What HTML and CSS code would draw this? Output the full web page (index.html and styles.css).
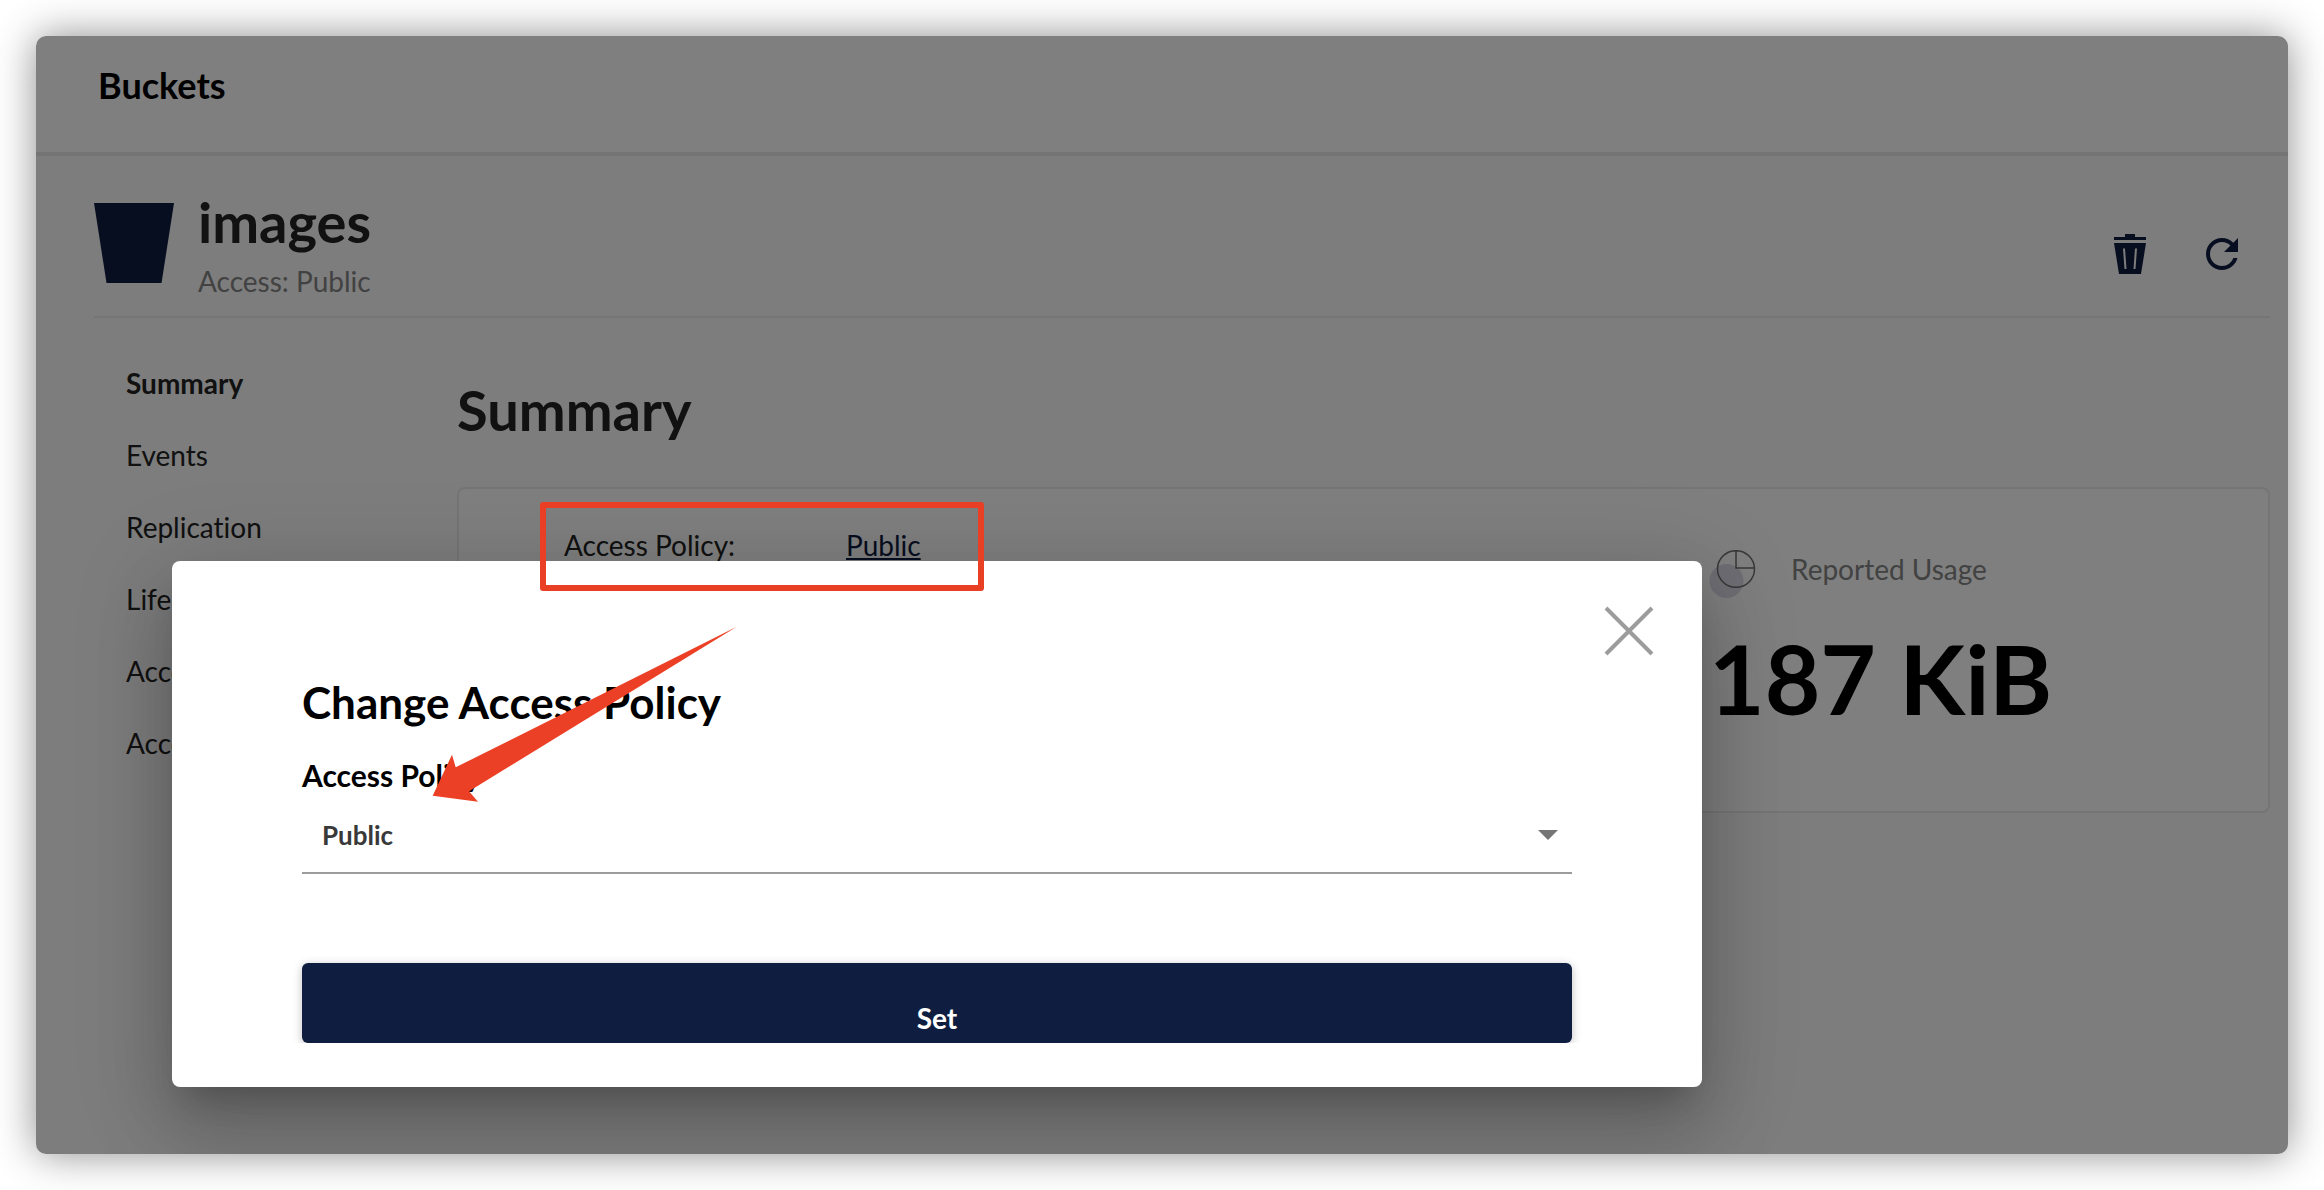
FILE: index.html
```html
<!DOCTYPE html>
<html lang="en">
<head>
<meta charset="utf-8">
<title>Buckets</title>
<link rel="stylesheet" href="styles.css">
</head>
<body>
<div class="window">
  <header class="topbar"><h1 class="topbar-title">Buckets</h1></header>
  <main class="page">
    <section class="bucket-head">
      <svg class="bucket-icon" viewBox="0 0 80 80" aria-hidden="true"><path d="M0 0H80L67.500 80H12.500Z"/></svg>
      <div class="bucket-info">
        <h2 class="heading">images</h2>
        <p class="bucket-access">Access: Public</p>
      </div>
      <div class="actions">
        <button class="icon-button" type="button" aria-label="Delete bucket">
          <svg width="32" height="40" viewBox="0 0 32 40"><path fill-rule="evenodd" d="M11 0H21V3H32V6H0V3H11ZM0 9H32L27 40H5ZM9 14.500L10.500 35H12.500L11 14.500ZM21 14.500L19.500 35H21.500L23 14.500Z"/></svg>
        </button>
        <button class="icon-button" type="button" aria-label="Refresh">
          <svg width="32" height="32" viewBox="4 4 16 16"><path d="M17.650 6.350C16.200 4.900 14.210 4 12 4c-4.420 0-7.990 3.580-7.990 8s3.570 8 7.990 8c3.730 0 6.840-2.550 7.730-6h-2.080c-.82 2.330-3.040 4-5.650 4-3.310 0-6-2.690-6-6s2.690-6 6-6c1.660 0 3.140.69 4.220 1.780L13 11h7V4z"/></svg>
        </button>
      </div>
    </section>
    <div class="columns">
      <nav class="side-nav">
        <a class="nav-link nav-link-active" href="#summary">Summary</a>
        <a class="nav-link" href="#events">Events</a>
        <a class="nav-link" href="#replication">Replication</a>
        <a class="nav-link" href="#lifecycle">Lifecycle</a>
        <a class="nav-link" href="#audit">Access Audit</a>
        <a class="nav-link" href="#rules">Access Rules</a>
      </nav>
      <section class="summary" id="summary">
        <h2 class="heading">Summary</h2>
        <div class="card">
          <span class="card-label">Access Policy:</span>
          <a class="card-link" href="#policy">Public</a>
          <div class="usage">
            <div class="usage-head">
              <svg width="48" height="48" viewBox="0 0 48 48" aria-hidden="true">
                <circle class="pie-shade" cx="17.500" cy="31" r="17"/>
                <path class="pie-line" d="M27 .7V18H45.500M45.500 19a18.500 18.300 0 1 1-37 0a18.500 18.300 0 1 1 37 0Z"/>
              </svg>
              <span>Reported Usage</span>
            </div>
            <strong class="usage-value">187 KiB</strong>
          </div>
        </div>
      </section>
    </div>
  </main>

  <div class="backdrop">
    <div class="dialog" role="dialog" aria-modal="true" aria-labelledby="dialog-title">
      <div class="dialog-close-row">
        <button class="close-button" type="button" aria-label="Close">
          <svg width="50" height="50" viewBox="0 0 50 50"><path d="M2 2L48 48M48 2L2 48"/></svg>
        </button>
      </div>
      <form class="dialog-body">
        <h2 class="dialog-title" id="dialog-title">Change Access Policy</h2>
        <label class="field-label" for="policy">Access Policy</label>
        <div class="select-box">
          <select class="select" id="policy">
            <option>Public</option>
            <option>Private</option>
            <option>Custom</option>
          </select>
          <svg class="select-arrow" width="20" height="10" viewBox="0 0 20 10" aria-hidden="true"><path d="M0 0H20L10 10Z"/></svg>
        </div>
        <button class="submit" type="button">Set</button>
      </form>
    </div>
  </div>

  <div class="mark-box"></div>
  <svg class="mark-arrow" width="306" height="176" viewBox="0 0 306 176" aria-hidden="true"><path d="M.7 169.700L20 128.700L23.700 141.300L304.700 .7L37 165.300L46 175.700Z"/></svg>
</div>
</body>
</html>
```
FILE: styles.css
```css
* {
  box-sizing: border-box;
}

body {
  display: flex;
  min-height: 100vh;
  margin: 0;
  padding: 36px;
  background: #fff;
  color: #222;
  font-family: Lato, "Liberation Sans", sans-serif;
  font-size: 28px;
  font-variant-ligatures: none;
  line-height: 34px;
  text-rendering: optimizeLegibility;
}

h1,
h2,
p {
  margin: 0;
}

button {
  font-family: inherit;
  border: 0;
  cursor: pointer;
}

svg {
  display: block;
}

.window {
  position: relative;
  flex: 1;
  border-radius: 10px;
  background: #fafafa;
  box-shadow: 0 0 40px rgba(0, 0, 0, 0.45);
}

.topbar {
  padding: 27px 62px 45px;
  border-bottom: 4px solid #e8e8e8;
  border-radius: 10px 10px 0 0;
  background: #fff;
}

.topbar-title {
  color: #000;
  font-size: 36px;
  line-height: 44px;
}

.page {
  padding: 32px 18px 0 58px;
}

.bucket-head {
  display: flex;
  align-items: center;
  gap: 24px;
  padding-bottom: 18px;
  border-bottom: 2px solid #eaeaea;
}

.bucket-icon {
  width: 80px;
  height: 80px;
  fill: #0f1d40;
}

.bucket-info {
  flex: 1;
}

.heading {
  font-size: 56px;
  line-height: 68px;
}

.bucket-access {
  margin-top: 8px;
  color: #848484;
}

.actions {
  display: flex;
  align-self: flex-end;
  gap: 4px;
  padding-right: 4px;
}

.icon-button {
  display: grid;
  place-items: center;
  width: 88px;
  height: 88px;
  padding: 0;
  background: none;
  fill: #0f1d40;
}

.columns {
  display: grid;
  grid-template-columns: 363px 1fr;
}

.side-nav {
  display: flex;
  flex-direction: column;
  padding: 29px 0 0 32px;
}

.nav-link {
  padding: 19px 0;
  color: inherit;
  text-decoration: none;
}

.nav-link-active {
  font-weight: 700;
}

.summary {
  padding-top: 58px;
}

.card {
  display: grid;
  grid-template-columns: 282px 1fr 559px;
  align-items: start;
  min-height: 326px;
  margin-top: 43px;
  padding: 39px 0 48px 105px;
  border: 2px solid #eaeaea;
  border-radius: 8px;
  background: #fff;
}

.card-link {
  color: #0f1d40;
}

.usage {
  padding-top: 22px;
  color: #000;
}

.usage-head {
  display: flex;
  gap: 34px;
  color: #848484;
  line-height: 38px;
}

.pie-shade {
  fill: #dedde8;
}

.pie-line {
  fill: none;
  stroke: #707070;
  stroke-width: 1.5;
}

.usage-value {
  display: block;
  margin-top: 22px;
  font-size: 96px;
  line-height: 116px;
}

.backdrop {
  position: absolute;
  inset: 0;
  padding: 525px 586px 0 136px;
  overflow: hidden;
  border-radius: 10px;
  background: rgba(0, 0, 0, 0.5);
}

.dialog {
  border-radius: 8px;
  background: #fff;
  color: #000;
  box-shadow:
    0 22px 30px -14px rgba(0, 0, 0, 0.2),
    0 48px 76px 6px rgba(0, 0, 0, 0.14),
    0 18px 92px 16px rgba(0, 0, 0, 0.12);
}

.dialog-close-row {
  display: flex;
  justify-content: flex-end;
  padding: 45px 48px 19px;
}

.close-button {
  padding: 0;
  background: none;
  stroke: #9c9c9c;
  stroke-width: 4;
}

.dialog-body {
  display: flex;
  flex-direction: column;
  padding: 0 130px 44px;
}

.dialog-title {
  font-size: 44px;
  line-height: 54px;
}

.field-label {
  margin-top: 28px;
  font-size: 30px;
  font-weight: 700;
  line-height: 36px;
}

.select-box {
  display: grid;
  align-items: center;
  margin-top: 4px;
  border-bottom: 2px solid #9c9c9c;
}

.select,
.select-arrow {
  grid-area: 1 / 1;
}

.select {
  height: 75px;
  padding: 0 48px 0 20px;
  border: 0;
  background: none;
  color: #393939;
  font: 700 26px/32px Lato, "Liberation Sans", sans-serif;
  appearance: none;
}

.select-arrow {
  justify-self: end;
  margin-right: 14px;
  fill: #757575;
  pointer-events: none;
}

.submit {
  margin-top: 89px;
  padding: 38px 0 8px;
  border-radius: 6px;
  background: #0f1d40;
  color: #fff;
  font-size: 28px;
  font-weight: 700;
  line-height: 34px;
  box-shadow: 0 2px 10px rgba(0, 0, 0, 0.25);
  clip-path: inset(-20px -20px 0 -20px);
}

.mark-box {
  position: absolute;
  top: 466px;
  left: 504px;
  width: 444px;
  height: 89px;
  border: 6px solid #e83f25;
  border-radius: 3px;
  pointer-events: none;
}

.mark-arrow {
  position: absolute;
  top: 590px;
  left: 396px;
  fill: #ec4026;
  pointer-events: none;
}
```
